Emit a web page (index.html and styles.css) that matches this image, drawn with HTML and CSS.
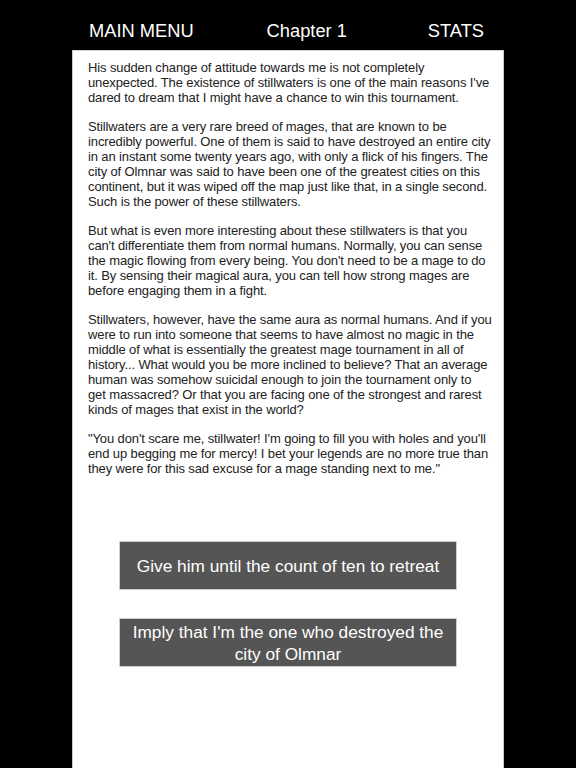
FILE: index.html
```html
<!DOCTYPE html>
<html>
<head>
<meta charset="utf-8">
<link rel="stylesheet" href="styles.css">
</head>
<body>
<div class="app">
  <header class="topbar">
    <span class="nav nav-left">MAIN MENU</span>
    <span class="nav nav-title">Chapter 1</span>
    <span class="nav nav-right">STATS</span>
  </header>
  <main class="page">
    <div class="story">
      <p>His sudden change of attitude towards me is not completely<br>unexpected. The existence of stillwaters is one of the main reasons I've<br>dared to dream that I might have a chance to win this tournament.</p>
      <p>Stillwaters are a very rare breed of mages, that are known to be<br>incredibly powerful. One of them is said to have destroyed an entire city<br>in an instant some twenty years ago, with only a flick of his fingers. The<br>city of Olmnar was said to have been one of the greatest cities on this<br>continent, but it was wiped off the map just like that, in a single second.<br>Such is the power of these stillwaters.</p>
      <p>But what is even more interesting about these stillwaters is that you<br>can't differentiate them from normal humans. Normally, you can sense<br>the magic flowing from every being. You don't need to be a mage to do<br>it. By sensing their magical aura, you can tell how strong mages are<br>before engaging them in a fight.</p>
      <p>Stillwaters, however, have the same aura as normal humans. And if you<br>were to run into someone that seems to have almost no magic in the<br>middle of what is essentially the greatest mage tournament in all of<br>history... What would you be more inclined to believe? That an average<br>human was somehow suicidal enough to join the tournament only to<br>get massacred? Or that you are facing one of the strongest and rarest<br>kinds of mages that exist in the world?</p>
      <p>"You don't scare me, stillwater! I'm going to fill you with holes and you'll<br>end up begging me for mercy! I bet your legends are no more true than<br>they were for this sad excuse for a mage standing next to me."</p>
    </div>
    <div class="choices">
      <button class="choice">Give him until the count of ten to retreat</button>
      <button class="choice">Imply that I'm the one who destroyed the city of Olmnar</button>
    </div>
  </main>
</div>
</body>
</html>
```

FILE: styles.css
```css
html, body {
  margin: 0;
  padding: 0;
  background: #000;
}
body {
  font-family: "Liberation Sans", Arial, sans-serif;
}
.app {
  width: 576px;
  height: 768px;
  overflow: hidden;
  display: flex;
  flex-direction: column;
  align-items: center;
}
.topbar {
  width: 432px;
  height: 50px;
  box-sizing: border-box;
  display: flex;
  align-items: center;
  padding: 12px 20px 0 17px;
  color: #fff;
  font-size: 18.3px;
}
.nav-title {
  margin-left: 73px;
}
.nav-right {
  margin-left: auto;
}
.page {
  width: 432px;
  flex: 1;
  box-sizing: border-box;
  background: #fff;
  border-left: 1px solid #c8c8c8;
  border-right: 1px solid #c8c8c8;
  border-top: 1px solid #d0d0d0;
  padding: 9px 4px 0 15px;
}
.story {
  color: #222;
  font-size: 13px;
  letter-spacing: -0.12px;
  line-height: 15px;
  white-space: nowrap;
}
.story p {
  margin: 0 0 14px 0;
}
.choices {
  margin-top: 65px;
  padding-right: 11px;
  display: flex;
  flex-direction: column;
  align-items: center;
  gap: 28px;
}
.choice {
  width: 338px;
  height: 49px;
  box-sizing: border-box;
  background: #555;
  color: #fff;
  border: 1px solid #cfcfcf;
  font-family: "Liberation Sans", Arial, sans-serif;
  font-size: 17.3px;
  line-height: 22px;
  padding: 1px 8px;
  margin: 0;
  text-align: center;
}
```
